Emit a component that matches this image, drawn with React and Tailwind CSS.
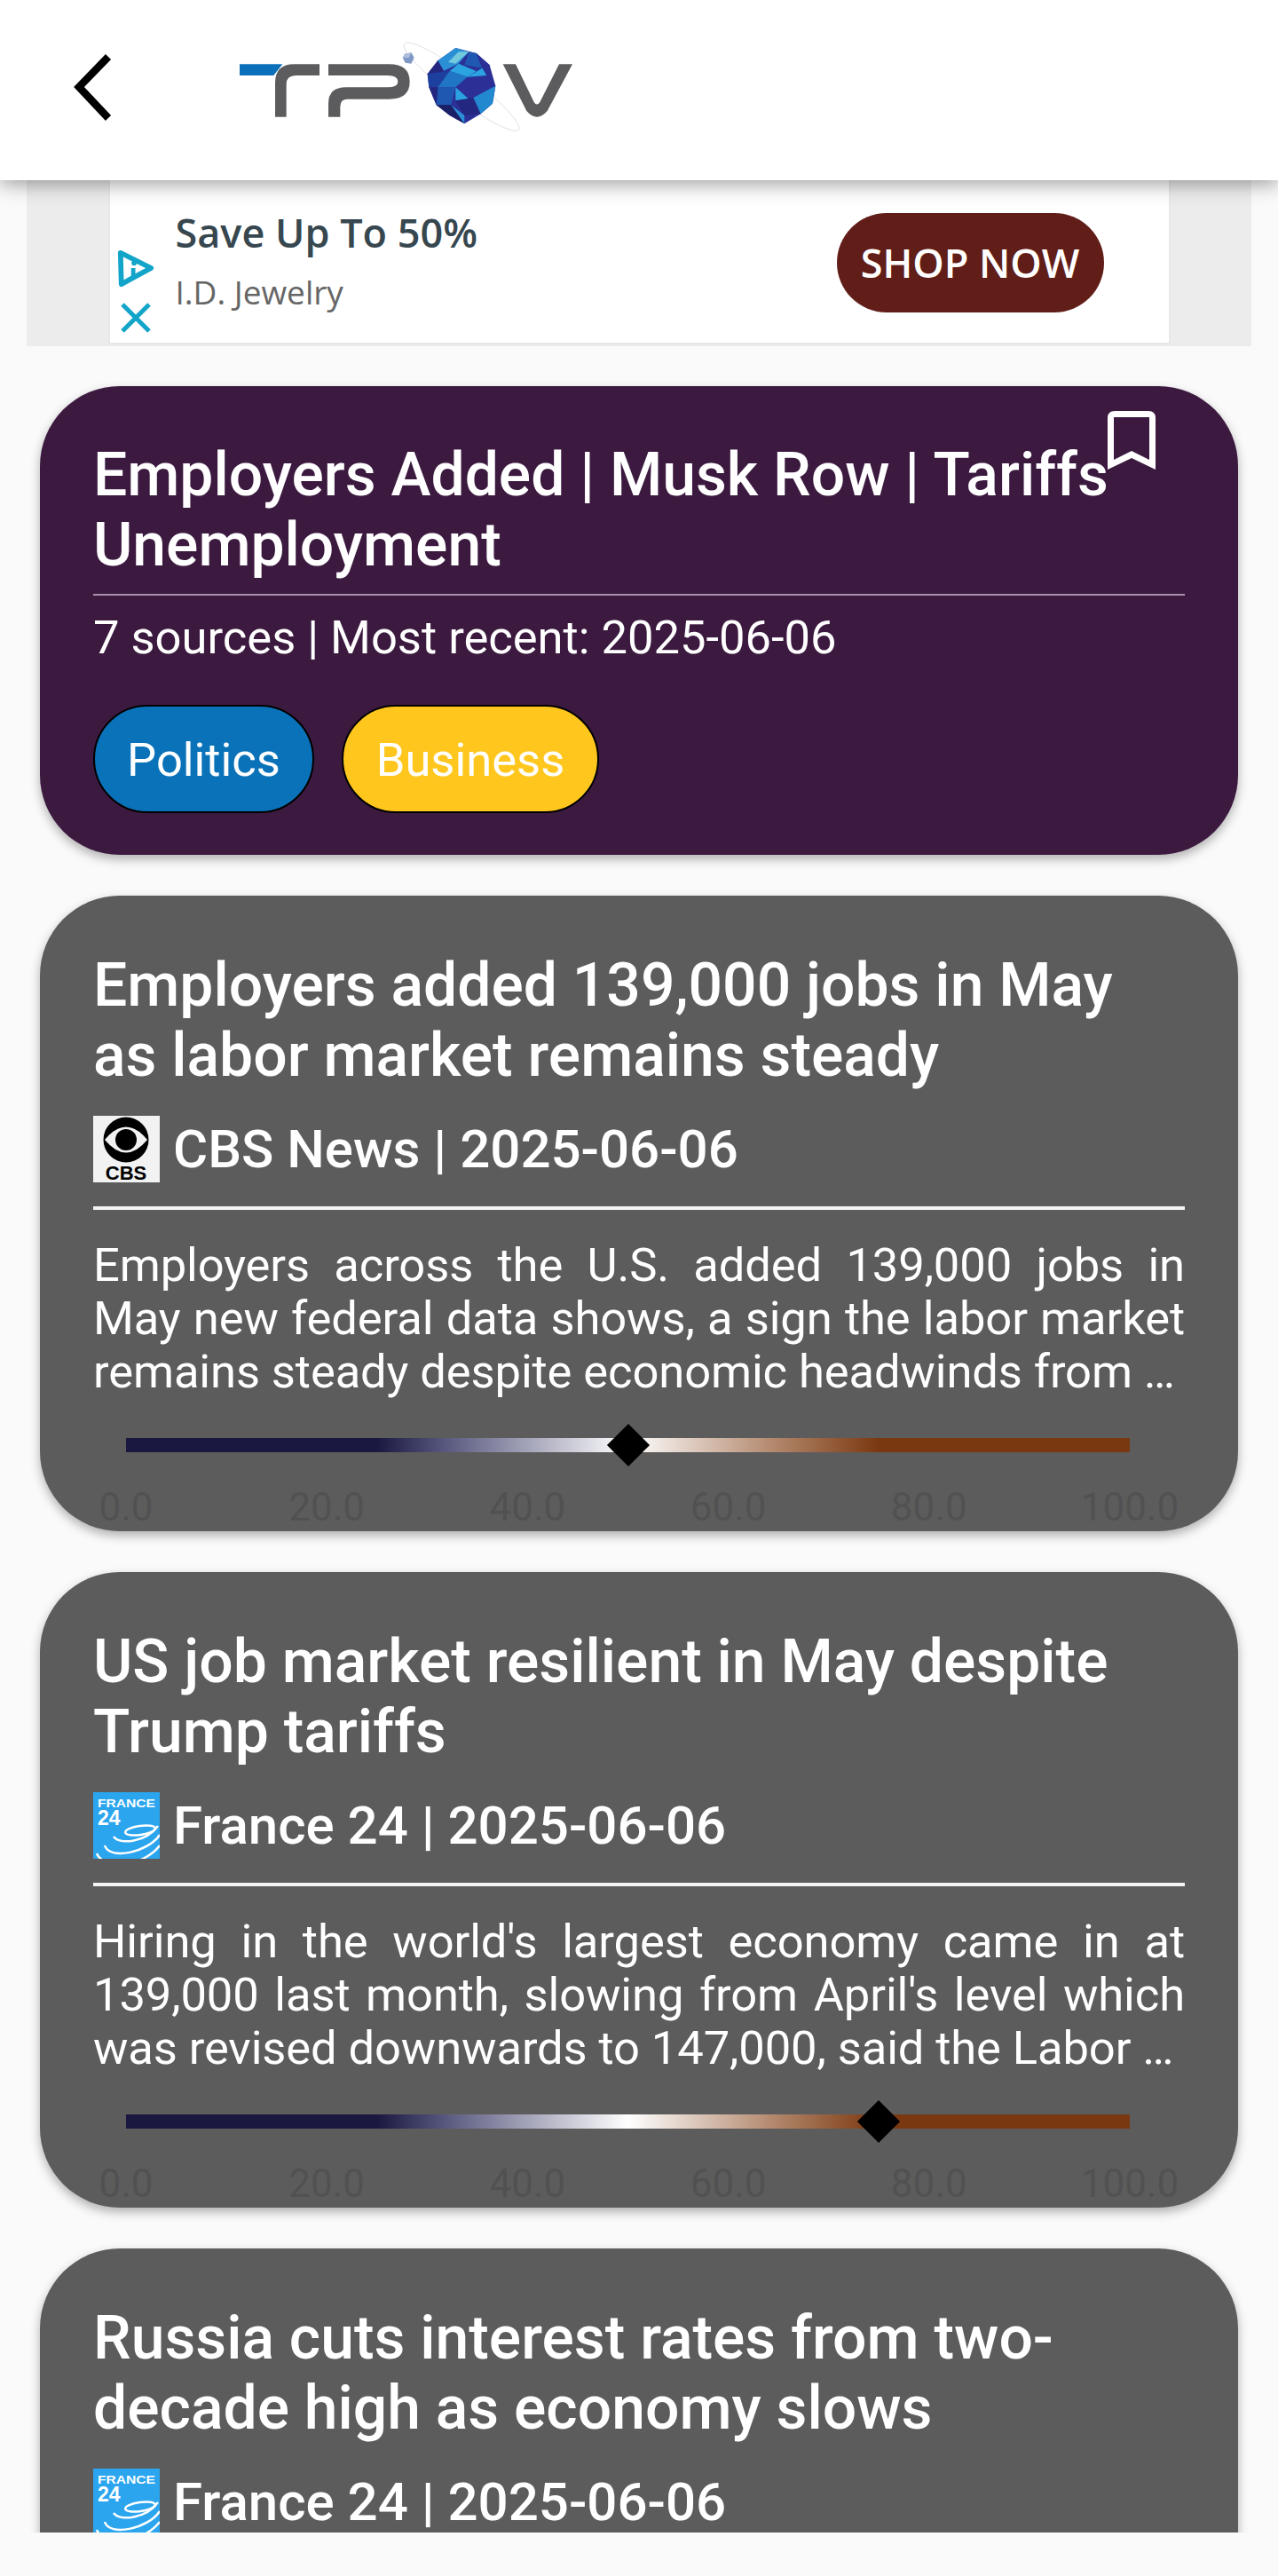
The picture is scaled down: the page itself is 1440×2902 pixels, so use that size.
import React from 'react';

const articles = [
  {
    title: 'Employers added 139,000 jobs in May as labor market remains steady',
    source: 'CBS News',
    date: '2025-06-06',
    logo: 'cbs',
    summary:
      'Employers across the U.S. added 139,000 jobs in May new federal data shows, a sign the labor market remains steady despite economic headwinds from …',
    bias: 50,
  },
  {
    title: 'US job market resilient in May despite Trump tariffs',
    source: 'France 24',
    date: '2025-06-06',
    logo: 'france24',
    summary:
      "Hiring in the world's largest economy came in at 139,000 last month, slowing from April's level which was revised downwards to 147,000, said the Labor …",
    bias: 75,
  },
  {
    title: 'Russia cuts interest rates from two-decade high as economy slows',
    source: 'France 24',
    date: '2025-06-06',
    logo: 'france24',
    summary:
      'Russia\'s central bank cut its key interest rate on Friday for the first time in nearly three years as the economy shows signs of slowing down after …',
    bias: 50,
  },
];

const ticks = ['0.0', '20.0', '40.0', '60.0', '80.0', '100.0'];

const TpovLogo = () => (
  <svg viewBox="0 0 1230 390" className="w-[410px] h-[130px] shrink-0">
    <polygon points="60,127 205,127 175,165 60,165" fill="#0b70b9" />
    <path d="M180 305 V190 Q180 127 245 127 H330 V165 H250 Q218 165 218 195 V305 Z" fill="#5c5c5e" />
    <path d="M360 127 H565 Q635 127 635 186 Q635 245 565 245 H425 Q400 245 400 270 V305 H360 V260 Q360 205 420 205 H560 Q595 205 595 186 Q595 165 560 165 H360 Z" fill="#5c5c5e" />
    <path d="M950 127 H993 L1055 255 Q1065 270 1075 255 L1140 127 H1185 L1100 285 Q1065 325 1030 285 Z" fill="#5c5c5e" />
    {/* orbit */}
    <ellipse cx="810" cy="203" rx="242" ry="42" transform="rotate(37 810 203)" fill="none" stroke="#d4d4d8" strokeWidth="2" />
    <polygon points="618,92 640,88 650,105 640,125 620,122 611,105" fill="#7e97c4" />
    <polygon points="618,92 640,88 632,106 611,105" fill="#aebedb" />
    {/* planet */}
    <polygon points="790,72 860,90 905,130 925,200 915,260 875,295 820,328 770,300 725,265 700,205 695,160 730,115" fill="#2b2f96" />
    <polygon points="790,72 835,85 800,125 750,150 730,115" fill="#2b8fd6" />
    <polygon points="800,85 835,85 790,125 765,120" fill="#72c9dc" />
    <polygon points="835,85 860,90 880,140 820,130" fill="#1f58b0" />
    <polygon points="800,125 860,150 830,170 770,150" fill="#2aa3e0" />
    <polygon points="860,90 905,130 895,165 880,140" fill="#2b2f96" />
    <polygon points="880,140 895,165 845,190 830,170" fill="#2aa3e0" />
    <polygon points="730,115 750,150 695,160" fill="#23277f" />
    <polygon points="695,160 770,150 730,205 700,205" fill="#1d3f9e" />
    <polygon points="770,150 830,170 790,205 730,205" fill="#2076c4" />
    <polygon points="830,170 895,165 925,200 850,240" fill="#2b2f96" />
    <polygon points="790,205 835,245 790,250" fill="#2aa3e0" />
    <polygon points="730,205 790,205 775,265 725,265" fill="#1f58b0" />
    <polygon points="700,205 730,205 725,265" fill="#23277f" />
    <polygon points="725,265 775,265 820,328 770,300" fill="#1a1f66" />
    <polygon points="790,250 850,240 875,295 820,300" fill="#23277f" />
    <polygon points="850,240 925,200 915,260 875,295" fill="#2288d0" />
    <polygon points="775,265 820,300 820,328" fill="#2b8fd6" />
  </svg>
);

const CbsLogo = () => (
  <svg viewBox="0 0 75 75" className="w-[75px] h-[75px] shrink-0">
    <rect width="75" height="75" fill="#f2f2f2" />
    <circle cx="37" cy="27" r="25.5" fill="#000" />
    <path d="M13 27 Q37 -2 61 27 Q37 56 13 27 Z" fill="#f2f2f2" />
    <circle cx="37" cy="27" r="12" fill="#000" />
    <text x="37" y="72" textAnchor="middle" fontSize="22" fontWeight="700" fill="#000" className="font-['Liberation_Sans']">CBS</text>
  </svg>
);

const France24Logo = () => (
  <svg viewBox="0 0 75 75" className="w-[75px] h-[75px] shrink-0">
    <rect width="75" height="75" fill="#2ba5ee" />
    <g fill="none" stroke="#fff" strokeWidth="2.5">
      <ellipse cx="53" cy="43" rx="17" ry="5" transform="rotate(-8 53 43)" />
      <path d="M23 50 C30 60 60 56 73 38" />
      <path d="M13 60 C18 77 62 68 75 48" />
      <path d="M4 69 C10 86 55 86 75 60" />
    </g>
    <text x="5" y="17" fontSize="13" fontWeight="700" fill="#fff" textLength="65" lengthAdjust="spacingAndGlyphs" className="font-['Liberation_Sans']">FRANCE</text>
    <text x="5" y="37" fontSize="23" fontWeight="700" fill="#fff" className="font-['Liberation_Sans']">24</text>
  </svg>
);

const BiasSlider = ({ value }) => (
  <div className="mt-[45px] ml-[37px] mr-[62px]">
    <div className="relative h-[16px] bg-[linear-gradient(90deg,#1a1840_0%,#1a1840_25%,#5a5a80_32%,#ffffff_50%,#b08468_65%,#7a3810_75%,#7a3810_100%)]">
      <div
        className="absolute top-[-9px] w-[34px] h-[34px] -ml-[17px] bg-black rotate-45"
        style={{ left: `${value}%` }}
      />
    </div>
    <div className="flex justify-between mt-[37px] text-[44px] leading-[50px] text-[#525152]">
      {ticks.map((t) => (
        <span key={t} className="w-0 flex justify-center whitespace-nowrap">{t}</span>
      ))}
    </div>
  </div>
);

const ArticleCard = ({ article }) => (
  <div className="rounded-[90px] bg-[#5d5c5d] shadow-[0_5px_12px_rgba(0,0,0,0.3)] px-[60px] pt-[62px] h-[716px] overflow-hidden text-white">
    <h2 className="text-[67.8px] leading-[79px] font-medium max-w-[1210px]">{article.title}</h2>
    <div className="flex items-center gap-[15px] mt-[28px] h-[75px]">
      {article.logo === 'cbs' ? <CbsLogo /> : <France24Logo />}
      <span className="text-[60px] leading-[75px] font-medium whitespace-nowrap">
        {article.source} | {article.date}
      </span>
    </div>
    <div className="h-[4px] bg-[#f4f4f4] mt-[27px]" />
    <p className="mt-[32px] text-[52.5px] leading-[60px] tracking-[-0.1px] text-justify">{article.summary}</p>
    <BiasSlider value={article.bias} />
  </div>
);

export default function App() {
  return (
    <div className="w-[1440px] h-[2902px] bg-[#fafafa] font-['Roboto',sans-serif] overflow-hidden">
      {/* App bar */}
      <header className="relative z-10 flex items-start h-[203px] bg-white shadow-[0_3px_22px_rgba(0,0,0,0.42)]">
        <svg viewBox="0 0 50 80" className="w-[50px] h-[80px] mt-[59px] ml-[80px] shrink-0">
          <polyline points="42,5 9,39 42,74" fill="none" stroke="#000" strokeWidth="8.5" />
        </svg>
        <div className="ml-[120px] mt-[30px]">
          <TpovLogo />
        </div>
      </header>

      <main className="h-[2650px] overflow-hidden">
        {/* Ad banner */}
        <div className="flex justify-center mx-[30px] h-[187px] bg-[#ececec]">
          <div className="flex items-center w-[1197px] h-[185px] bg-white border-x-2 border-b-2 border-[#e8e8e8] pl-[4px] font-['Open_Sans',sans-serif]">
            <div className="flex flex-col items-center gap-[16px] mt-[66px] w-[50px] shrink-0">
              <svg viewBox="0 0 44 46" className="w-[44px] h-[44px]">
                <path d="M4 5 L40 23 L14 37 L5 42 Z" fill="none" stroke="#12a5c9" strokeWidth="6" strokeLinejoin="round" />
                <circle cx="20" cy="17" r="3" fill="#12a5c9" />
                <path d="M19 23 V36" stroke="#12a5c9" strokeWidth="5" />
              </svg>
              <svg viewBox="0 0 36 36" className="w-[36px] h-[36px]">
                <path d="M3 3 L33 33 M33 3 L3 33" stroke="#12a5c9" strokeWidth="5" />
              </svg>
            </div>
            <div className="ml-[20px] flex-1 mt-[2px]">
              <div className="text-[45px] leading-[58px] font-semibold text-[#37474f] mt-[-4px]">Save Up To 50%</div>
              <div className="text-[37px] leading-[50px] mt-[13px] text-[#666666]">I.D. Jewelry</div>
            </div>
            <div className="flex items-center justify-center w-[301px] h-[112px] mr-[73px] rounded-[56px] bg-[#611e18] text-white text-[45px] font-semibold mt-[3px]">
              SHOP NOW
            </div>
          </div>
        </div>

        <div className="flex flex-col gap-[46px] mx-[45px] mt-[45px]">
          {/* Story header card */}
          <div className="relative rounded-[90px] bg-[#3c1a40] shadow-[0_5px_12px_rgba(0,0,0,0.3)] px-[60px] pt-[61px] h-[528px] text-white">
            <svg viewBox="0 0 54 66" className="absolute top-[28px] right-[93px] w-[54px] h-[66px]">
              <path fillRule="evenodd" d="M8 0 H46 Q54 0 54 8 V66 L27 53 L0 66 V8 Q0 0 8 0 Z M7 7 V55 L27 45 L47 55 V7 Z" fill="#fff" />
            </svg>
            <h1 className="text-[67.8px] leading-[79px] font-medium">
              Employers Added | Musk Row | Tariffs Unemployment
            </h1>
            <div className="h-[2px] bg-[#a98fae] mt-[15px]" />
            <p className="text-[52.5px] leading-[60px] mt-[17px]">7 sources | Most recent: 2025-06-06</p>
            <div className="flex gap-[31px] mt-[46px]">
              <span className="flex items-center justify-center w-[249px] h-[122px] rounded-[61px] border-2 border-black bg-[#0a72b8] text-[52.5px] pt-[2px]">
                Politics
              </span>
              <span className="flex items-center justify-center w-[290px] h-[122px] rounded-[61px] border-2 border-black bg-[#ffc61e] text-[52.5px] pt-[2px]">
                Business
              </span>
            </div>
          </div>

          {articles.map((a) => (
            <ArticleCard key={a.title} article={a} />
          ))}
        </div>
      </main>
    </div>
  );
}
